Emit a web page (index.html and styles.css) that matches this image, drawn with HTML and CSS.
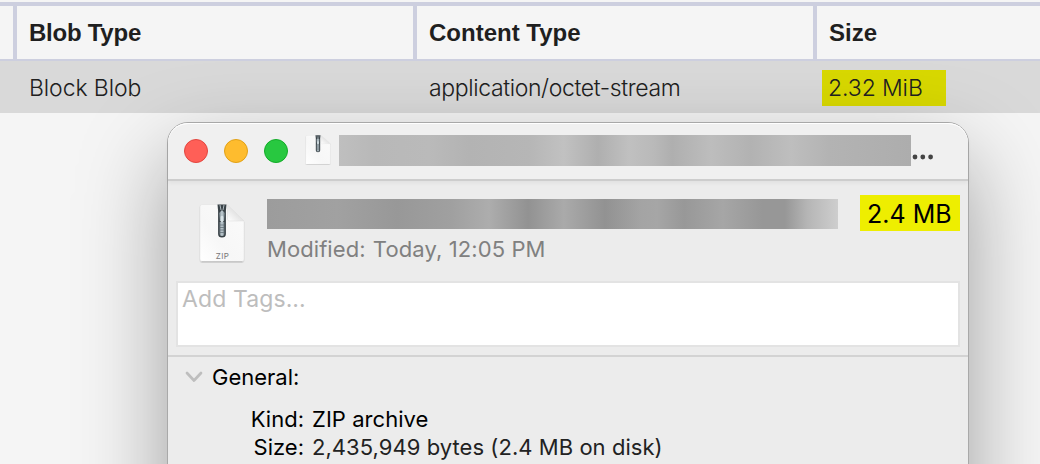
FILE: index.html
```html
<!DOCTYPE html>
<html lang="en">
<head>
<meta charset="utf-8">
<title>Blob size</title>
<link rel="stylesheet" href="styles.css">
</head>
<body>
<div class="grid">
  <div class="row head">
    <div class="cell gutter"></div>
    <div class="cell"><span class="h-blob">Blob Type</span></div>
    <div class="cell"><span class="h-content">Content Type</span></div>
    <div class="cell last"><span class="h-size">Size</span></div>
  </div>
  <div class="row data">
    <div class="cell gutter"></div>
    <div class="cell"><span class="d-blob">Block Blob</span></div>
    <div class="cell"><span class="d-content">application/octet-stream</span></div>
    <div class="cell last"><span class="mark d-size">2.32 MiB</span></div>
  </div>
</div>

<section class="window">
  <header class="titlebar">
    <i class="light red"></i><i class="light yellow"></i><i class="light green"></i>
    <svg class="doc-small" width="28" height="30" viewBox="-1 2 50 58.500" preserveAspectRatio="none">
      <use href="#zipdoc"/>
    </svg>
    <div class="redacted title-redacted"></div>
    <svg class="dots" width="24" height="6" viewBox="0 0 24 6"><g fill="#444"><circle cx="4" cy="3" r="2.4"/><circle cx="11.8" cy="3" r="2.4"/><circle cx="19.6" cy="3" r="2.4"/></g></svg>
  </header>
  <div class="summary">
    <svg class="doc" width="48" height="62" viewBox="0 0 48 62">
      <defs>
        <linearGradient id="paper" x1="0" y1="1" x2="1" y2="0"><stop offset="0" stop-color="#fff"/><stop offset=".4" stop-color="#f7f7f7"/><stop offset="1" stop-color="#fbfbfb"/></linearGradient>
        <linearGradient id="fold" x1="0" y1="1" x2="1" y2="0"><stop offset="0" stop-color="#fff"/><stop offset=".5" stop-color="#e4e4e4"/></linearGradient>
        <linearGradient id="metal" x1="0" x2="1" y1="0" y2="0"><stop offset="0" stop-color="#748087"/><stop offset=".5" stop-color="#c5d2d8"/><stop offset="1" stop-color="#66737a"/></linearGradient>
        <g id="zipdoc">
          <path d="M4 3h25.500l17 17v38q0 3-3 3H4q-2.500 0-2.500-3V5.500Q1.500 3 4 3Z" fill="#000" opacity=".08"/>
          <path d="M4 2.500h25.500l16.500 16.500v38q0 2.500-2.500 2.500H4.500Q2 59.500 2 57V4.500q0-2 2-2Z" fill="url(#paper)" stroke="#e0e0e0" stroke-width=".5"/>
          <path d="M3.500 59.800h41" stroke="#bcbcbc" stroke-width="1"/>
          <path d="M29.500 3v14q0 2 2 2H46Z" fill="url(#fold)" stroke="#dcdcdc" stroke-width=".5"/>
          <path d="M19.500 2.500h9l-.6 6.500v23q0 3.500-3.900 3.500t-3.900-3.500V9Z" fill="#394247"/>
          <path d="M22 3l1 5M26 3l-1 5" stroke="#aeb9bf" stroke-width="1"/>
          <path d="M24 8l2.900 3-.8 8h-4.200L21.100 11Z" fill="url(#metal)"/>
          <rect x="22.600" y="14" width="2.800" height="6" rx="1" fill="#d8e3e7"/>
          <path d="M21.500 20h5v12q0 2-2.500 2t-2.500-2Z" fill="url(#metal)"/>
          <path d="M22 23h4M22 25.500h4M22 28h4M22 30.500h4" stroke="#657178" stroke-width=".8"/>
        </g>
      </defs>
      <use href="#zipdoc"/>
      <text x="24.500" y="57" text-anchor="middle" class="zip-label">ZIP</text>
    </svg>
    <div class="info">
      <div class="redacted name-redacted"></div>
      <div class="modified"><span>Modified: <span class="when">Today, 12:05 PM</span></span></div>
    </div>
    <div class="mark size-mark"><span>2.4 MB</span></div>
  </div>
  <div class="tags"><span>Add Tags...</span></div>
  <div class="general">
    <div class="general-head">
      <svg width="18" height="12" viewBox="0 0 18 12"><path d="M2 2l7 7.500L16 2" fill="none" stroke="#bebebe" stroke-width="2.700" stroke-linecap="round" stroke-linejoin="round"/></svg>
      <span class="general-title">General:</span>
    </div>
    <dl>
      <dt><span>Kind:</span></dt><dd><span class="kind">ZIP archive</span></dd>
      <dt><span>Size:</span></dt><dd class="soft"><span class="bytes">2,435,949 bytes (2.4 MB on disk)</span></dd>
    </dl>
  </div>
</section>
</body>
</html>
```

FILE: styles.css
```css
* { box-sizing: border-box; }
body {
  margin: 0;
  width: 1040px;
  height: 464px;
  position: relative;
  overflow: hidden;
  background: #f5f5f5;
  font-family: Inter, "Liberation Sans", sans-serif;
}
.grid { padding-top: 2px; }
.row { display: grid; grid-template-columns: 13px 400px 400px 1fr; }
.head {
  position: relative;
  z-index: 1;
  height: 59px;
  border-top: 4px solid #cdcfdf;
  border-bottom: 2px solid #cdcfdf;
  background: #f5f5f5;
  font: bold 24px "Liberation Sans", Arial, sans-serif;
  color: #1f1f1f;
}
.h-blob { letter-spacing: -.25px; }
.cell { display: flex; align-items: center; padding-left: 16px; white-space: nowrap; }
.gutter { padding: 0; }
.head .cell:not(.gutter) { border-left: 4px solid #cdcfdf; padding-left: 12px; }
.data { height: 52px; padding-top: 2px; background: #d9d9d9; font-size: 23px; font-weight: 300; color: #202020; }
.data .last { padding-left: 9px; }
.d-blob { letter-spacing: -.1px; }
.d-content { letter-spacing: -.37px; }
.d-size { letter-spacing: -.1px; }
.mark { background: #eeee00; }
.data .mark {
  width: 124px;
  height: 36px;
  line-height: 36px;
  padding-left: 6px;
  background: #d8d800;
}
.window {
  position: absolute;
  left: 167px;
  top: 122px;
  width: 802px;
  height: 620px;
  border: 1px solid #a9a9a9;
  border-radius: 21px;
  background: #ececec;
  box-shadow: 0 36px 88px rgba(0, 0, 0, .36);
}
.titlebar {
  display: flex;
  height: 58px;
  padding-left: 16px;
  border-bottom: 2px solid #cdcdcd;
  border-radius: 20px 20px 0 0;
  background: #f0f0f0;
  box-shadow: inset 0 1px #fff, 0 2px 4px rgba(0, 0, 0, .05);
}
.light { width: 24px; height: 24px; margin: 16px 16px 0 0; border-radius: 50%; border: 1px solid; }
.red { background: #ff5f57; border-color: #e2463f; }
.yellow { background: #febc2e; border-color: #e1a116; }
.green { background: #28c840; border-color: #12ac28; }
.doc-small { margin: 12px 0 0 0; }
.title-redacted {
  width: 572px;
  height: 31px;
  margin: 12px 0 0 7px;
  background: linear-gradient(90deg, #bfbfbf 0, #b8b8b8 35px, #bababa 90px, #b3b3b3 130px, #b6b6b6 190px, #c1c1c1 225px, #afafaf 259px, #c0c0c0 290px, #b9b9b9 315px, #afafaf 333px, #bdbdbd 372px, #b2b2b2 412px, #bebebe 452px, #b3b3b3 490px, #adadad 572px);
}
.dots { margin: 31px 0 0; }
.summary { display: flex; height: 100px; padding-left: 30px; }
.doc { margin-top: 21px; }
.zip-label { font: 8px Inter, sans-serif; fill: #777; letter-spacing: .4px; }
.info { width: 571px; margin: 18px 0 0 21px; }
.name-redacted {
  height: 30px;
  background: linear-gradient(90deg, #9c9c9c 0, #a1a1a1 70px, #989898 130px, #a0a0a0 185px, #adadad 222px, #929292 261px, #aaaaaa 297px, #929292 338px, #a4a4a4 374px, #a6a6a6 390px, #989898 417px, #a6a6a6 456px, #979797 496px, #979797 518px, #b5b5b5 540px, #cecece 571px);
}
.modified { margin-top: 7px; line-height: 26px; font-size: 22px; letter-spacing: .07px; color: #808080; white-space: nowrap; }
.when { margin-left: 1px; letter-spacing: .1px; }
.size-mark {
  width: 100px;
  height: 36px;
  margin: 14px 0 0 22px;
  padding-left: 7px;
  font-size: 25px;
  line-height: 38px;
  color: #000;
  white-space: nowrap;
}
.tags {
  width: 784px;
  height: 66px;
  margin-left: 8px;
  padding: 3px 0 0 4px;
  border: 2px solid #e3e3e3;
  background: #fff;
  color: #bdbdbd;
  font-size: 23px;
  line-height: 27px;
  letter-spacing: .1px;
}
.general { margin-top: 8px; border-top: 2px solid #d3d3d3; }
.general-head { display: flex; align-items: center; height: 40px; padding-left: 17px; font-size: 22px; color: #000; }
.general-title { margin-left: 9px; }
dl { display: grid; grid-template-columns: 136px 1fr; column-gap: 8px; margin: 8px 0 0; font-size: 22px; line-height: 28px; color: #000; }
dt { text-align: right; }
dd { margin: 0; white-space: nowrap; }
.soft { color: #222; }
.kind, .bytes { letter-spacing: .05px; }
```
